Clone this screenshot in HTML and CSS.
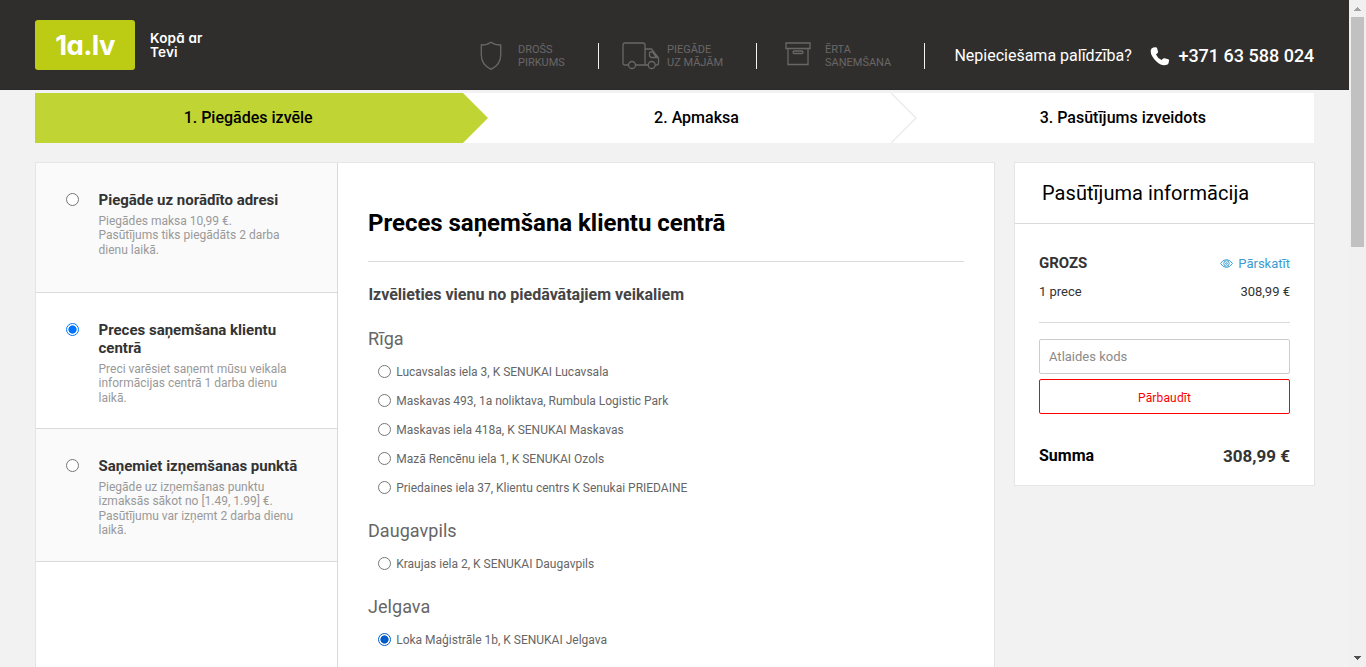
FILE: index.html
```html
<!DOCTYPE html>
<html lang="lv">
<head>
<meta charset="utf-8">
<title>1a.lv – Piegādes izvēle</title>
<link rel="stylesheet" href="styles.css">
</head>
<body>
<div class="window">
<div class="page">
  <header class="header">
    <div class="brand">
      <div class="logo"><span class="logo-text">1a.lv</span></div>
      <div class="slogan">Kopā ar<br>Tevi</div>
    </div>
    <div class="features">
      <div class="feature feature-safe">
        <svg class="icon" width="22" height="30" viewBox="0 0 22 30"><path d="M11 1.2C8 3.4 5 4 1.3 4V14c0 7 3.700 11.500 9.700 14.300C17 25.500 20.700 21 20.700 14V4C17 4 14 3.400 11 1.200Z"/></svg>
        <span class="feature-label">DROŠS<br>PIRKUMS</span>
      </div>
      <div class="feature feature-home">
        <svg class="icon" width="38" height="28" viewBox="0 0 38 28"><path d="M6.500 23H3Q1 23 1 21V3Q1 1 3 1H21Q23 1 23 3V23M13.500 23H26M23 7H29.500L36.500 16V21Q36.500 23 34.500 23H33.500M28.500 10H30.500L34.500 15.500H30Q27.500 15.500 27.500 13V11Q27.500 10 28.500 10Z"/><circle cx="10" cy="23" r="3.500"/><circle cx="29.700" cy="23" r="3.500"/></svg>
        <span class="feature-label">PIEGĀDE<br>UZ MĀJĀM</span>
      </div>
      <div class="feature feature-pickup">
        <svg class="icon" width="26" height="24" viewBox="0 0 26 24"><path d="M1 1H25V6.500H1ZM3 6.500V22.500H23V6.500"/><rect x="8" y="9" width="10" height="2.500" rx="1.200"/></svg>
        <span class="feature-label">ĒRTA<br>SAŅEMŠANA</span>
      </div>
    </div>
    <div class="help">
      <span class="help-text">Nepieciešama palīdzība?</span>
      <svg class="phone-icon" width="20" height="19" viewBox="0 0 20 19"><path d="M3.200 .5 5.800 .2Q6.700 .2 7 1L8 4.600Q8.200 5.300 7.600 5.900L6 7.400Q7.500 11 11.500 13L13.200 11.500Q13.800 11 14.500 11.200L18.300 12.300Q19.200 12.600 19.100 13.500L18.500 16.200Q18.200 17 17.500 17.400Q12 20 6.200 14.200Q0 8 .8 3Q1.200 1 3.200 .5Z"/></svg>
      <span class="phone-number">+371 63 588 024</span>
    </div>
  </header>

  <nav class="steps">
    <div class="step step-active">1. Piegādes izvēle<svg class="arrow" width="27" height="50"><path class="arrow-active" d="M0 0H2L27 25 2 50H0Z"/></svg></div>
    <div class="step step-next">2. Apmaksa<svg class="arrow arrow-second" width="27" height="50"><path class="arrow-line" d="M0 0 25 25 0 50"/></svg></div>
    <div class="step step-next">3. Pasūtījums izveidots</div>
  </nav>

  <div class="columns">
    <main class="checkout">
      <div class="methods">
        <label class="method method-address">
          <span class="radio"></span>
          <span class="method-body"><b class="method-title">Piegāde uz norādīto adresi</b>
          <span class="method-note">Piegādes maksa 10,99 €.<br>Pasūtījums tiks piegādāts 2 darba<br>dienu laikā.</span></span>
        </label>
        <label class="method method-center">
          <span class="radio radio-checked"></span>
          <span class="method-body"><b class="method-title">Preces saņemšana klientu<br>centrā</b>
          <span class="method-note">Preci varēsiet saņemt mūsu veikala<br>informācijas centrā 1 darba dienu<br>laikā.</span></span>
        </label>
        <label class="method method-point">
          <span class="radio"></span>
          <span class="method-body"><b class="method-title">Saņemiet izņemšanas punktā</b>
          <span class="method-note">Piegāde uz izņemšanas punktu<br>izmaksās sākot no [1.49, 1.99] €.<br>Pasūtījumu var izņemt 2 darba dienu<br>laikā.</span></span>
        </label>
      </div>
      <section class="stores">
        <h1 class="stores-title">Preces saņemšana klientu centrā</h1>
        <h2 class="stores-subtitle">Izvēlieties vienu no piedāvātajiem veikaliem</h2>
        <h3 class="city">Rīga</h3>
        <label class="store"><span class="radio"></span>Lucavsalas iela 3, K SENUKAI Lucavsala</label>
        <label class="store"><span class="radio"></span>Maskavas 493, 1a noliktava, Rumbula Logistic Park</label>
        <label class="store"><span class="radio"></span>Maskavas iela 418a, K SENUKAI Maskavas</label>
        <label class="store"><span class="radio"></span>Mazā Rencēnu iela 1, K SENUKAI Ozols</label>
        <label class="store"><span class="radio"></span>Priedaines iela 37, Klientu centrs K Senukai PRIEDAINE</label>
        <h3 class="city">Daugavpils</h3>
        <label class="store"><span class="radio"></span>Kraujas iela 2, K SENUKAI Daugavpils</label>
        <h3 class="city">Jelgava</h3>
        <label class="store"><span class="radio radio-checked radio-dark"></span>Loka Maģistrāle 1b, K SENUKAI Jelgava</label>
      </section>
    </main>

    <aside class="summary">
      <h2 class="summary-title">Pasūtījuma informācija</h2>
      <div class="summary-body">
        <div class="row row-cart"><b class="cart-title">GROZS</b>
          <a class="review"><svg class="eye" width="13" height="9" viewBox="0 0 13 9"><path d="M.5 4.500Q3 .6 6.500 .6T12.500 4.500Q10 8.400 6.500 8.400T.5 4.500Z"/><circle cx="6.500" cy="4.500" r="2.700"/><circle cx="6.500" cy="4.500" r=".8"/></svg>Pārskatīt</a></div>
        <div class="row row-items"><span>1 prece</span><span>308,99 €</span></div>
        <input class="code" type="text" placeholder="Atlaides kods">
        <button class="check">Pārbaudīt</button>
        <div class="row row-total"><span class="total-label">Summa</span><span class="total-value">308,99 €</span></div>
      </div>
    </aside>
  </div>
</div>
<div class="scrollbar">
  <svg class="scroll-arrow" width="7" height="4"><path d="M0 4V3H1V2H2V1H3V0H4V1H5V2H6V3H7V4Z" fill="#a3a3a3"/></svg>
  <div class="thumb"></div>
  <svg class="scroll-arrow scroll-down" width="7" height="4"><path d="M0 0V1H1V2H2V3H3V4H4V3H5V2H6V1H7V0Z" fill="#505050"/></svg>
</div>
</div>
</body>
</html>
```
FILE: styles.css
```css
* { box-sizing: border-box; }
body { margin: 0; font-family: Roboto, "Liberation Sans", sans-serif; background: #f2f2f2; color: #333; overflow: hidden; }
h1, h2, h3 { margin: 0; }
.window { display: flex; width: 1366px; height: 667px; overflow: hidden; }
.page { width: 1349px; height: 667px; overflow: hidden; }

/* Header */
.header { display: flex; height: 90px; padding-left: 35px; background: #302e2d; border-bottom: 1px solid #2c292b; color: #fff; }
.brand { display: flex; width: 445px; padding-top: 20px; }
.logo { width: 100px; height: 50px; border-radius: 3px; background: #bccc14; text-align: center; font: 700 27.5px/51px Inter, sans-serif; font-feature-settings: "cv11"; letter-spacing: -0.6px; }
.slogan { padding: 11px 0 0 15px; font: 600 13.5px/14px Inter, sans-serif; font-feature-settings: "cv11"; letter-spacing: .2px; }
.features { display: flex; padding-top: 43px; }
.feature { display: flex; height: 26px; border-right: 1px solid #f2f2f2; }
.feature-safe { width: 119px; }
.feature-home { width: 158px; padding-left: 23px; }
.feature-pickup { width: 168px; padding-left: 28px; }
.icon { flex: none; fill: none; stroke: #696766; stroke-width: 1.3; }
.feature-safe .icon { margin-top: -2px; }
.feature-home .icon, .feature-pickup .icon { margin-top: -1px; }
.feature-label { margin-left: 16px; font-size: 11px; line-height: 13px; color: #696766; white-space: nowrap; }
.feature-home .feature-label { margin-left: 7px; }
.feature-pickup .feature-label { margin-left: 14px; }
.help { display: flex; padding: 46px 0 0 29.4px; line-height: 20px; white-space: nowrap; }
.help-text { width: 196px; font-size: 16px; }
.phone-icon { fill: #fff; margin-top: 1px; }
.phone-number { margin-left: 8px; font-size: 18px; font-weight: 500; }

/* Checkout steps */
.steps { display: grid; grid-template-columns: repeat(3, 1fr); width: 1279px; height: 50px; margin: 3px 0 19px 35px; background: #fff; }
.step { position: relative; font-size: 16px; font-weight: 500; line-height: 50px; text-align: center; color: #000; }
.step-active { background: #c0d534; }
.step-next { padding-left: 44px; }
.arrow { position: absolute; left: 100%; top: 0; z-index: 1; }
.arrow-second { margin-left: 3px; }
.arrow-active { fill: #c0d534; }
.arrow-line { fill: none; stroke: #ececec; stroke-width: 1.5; }

/* Delivery methods */
.columns { display: flex; align-items: flex-start; gap: 19px; padding-left: 35px; }
.checkout { display: flex; width: 960px; height: 700px; background: #fff; border: 1px solid #e5e5e5; }
.methods { width: 302px; border-right: 1px solid #dadada; }
.method { display: flex; padding: 28px 0 0 30px; border-bottom: 1px solid #dadada; background: #fafafa; }
.method-address { height: 130px; }
.method-center { height: 136px; background: #fff; }
.method-point { height: 133px; }
.radio { flex: none; width: 13px; height: 13px; border: 1px solid #767676; border-radius: 50%; background: #fff; }
.radio-checked { border-color: #0075ff; background: radial-gradient(circle, #0075ff 3.800px, #fff 4.400px); }
.radio-dark { border-color: #005cc8; background: radial-gradient(circle, #005cc8 3.800px, #fff 4.400px); }
.method .radio { margin: 2px 19.5px 0 0; }
.method-title { display: block; font-size: 15px; font-weight: 700; line-height: 18px; white-space: nowrap; }
.method-note { display: block; margin-top: 5px; font-size: 12px; line-height: 14.400px; color: #999; white-space: nowrap; }

/* Store list */
.stores { flex: 1; padding: 0 30px; }
.stores-title { height: 99px; padding-top: 45px; border-bottom: 1px solid #dadada; font-size: 24px; font-weight: 700; line-height: 30px; letter-spacing: -.03px; color: #000; }
.stores-subtitle { margin-top: 23px; padding-left: .4px; font-size: 16px; font-weight: 700; line-height: 20px; color: #444; }
.city { margin: 22px 0 10px; font-size: 18px; font-weight: 400; line-height: 24px; letter-spacing: .05px; color: #666; }
.store { display: flex; align-items: flex-start; height: 20px; margin-bottom: 9px; padding-left: 10px; font-size: 12px; line-height: 22px; color: #666; }
.store .radio { margin: 4px 5.2px 0 0; }

/* Order summary */
.summary { width: 301px; height: 324px; background: #fff; border: 1px solid #e5e5e5; }
.summary-title { height: 61px; padding-left: 27px; border-bottom: 1px solid #dadada; font-size: 20px; font-weight: 400; line-height: 60px; letter-spacing: .06px; color: #000; }
.summary-body { padding: 29px 24px 0; }
.row { display: flex; justify-content: space-between; line-height: 20px; }
.cart-title { font-size: 15px; font-weight: 700; }
.review { font-size: 13px; color: #3c9cd0; line-height: 22px; }
.eye { margin-right: 5px; fill: none; stroke: #3c9cd0; stroke-width: 1; }
.row-items { height: 41px; margin-top: 7px; border-bottom: 1px solid #dadada; font-size: 13px; }
.code, .check { display: block; width: 100%; height: 35px; border: 1px solid #ccc; border-radius: 2px; background: #fff; font-family: inherit; }
.code { margin-top: 16px; padding: 0 9px; font-size: 13px; }
.code::placeholder { color: #8a8a8a; }
.check { margin-top: 5px; padding: 2px 0 0; border-color: #f00; color: #f00; font-size: 12px; font-weight: 400; letter-spacing: .15px; }
.row-total { margin-top: 32px; font-size: 16px; font-weight: 700; }
.total-label { color: #000; }
.total-value { font-size: 17px; }

/* Scrollbar */
.scrollbar { display: flex; flex-direction: column; width: 17px; height: 667px; padding: 7px 0 7px 2px; background: #f0f0f0; }
.scroll-arrow { margin-left: 3px; flex: none; }
.thumb { width: 13px; height: 230px; margin-top: 6px; background: #c1c1c1; }
.scroll-down { margin-top: auto; }
```
